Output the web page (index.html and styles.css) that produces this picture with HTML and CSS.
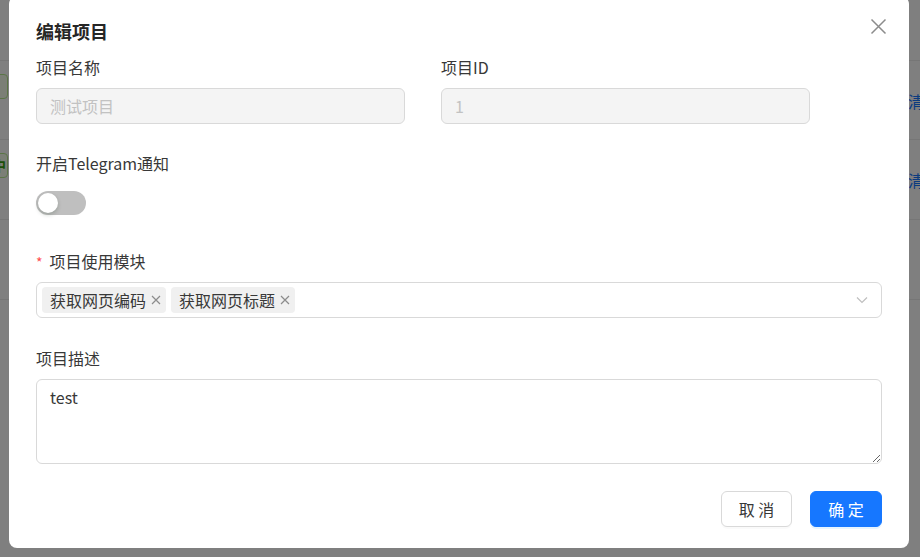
FILE: index.html
```html
<!DOCTYPE html>
<html>
<head>
    <meta charset="UTF-8">
    <title>编辑项目</title>
    <link rel="stylesheet" href="styles.css">
</head>
<body>
    <div class="page">
        <div class="table-row">
            <span class="status-tag status-tag-done">完成</span>
            <a class="row-link">清空</a>
        </div>
        <div class="table-row">
            <span class="status-tag">运行中</span>
            <a class="row-link">清空</a>
        </div>
        <div class="table-row"></div>
    </div>

    <div class="mask"></div>

    <div class="modal-wrap">
        <div class="modal">
            <button class="modal-close" aria-label="close">
                <svg width="17" height="17" viewBox="0 0 17 17">
                    <path d="M1.5 1.5 L15.5 15.5 M15.5 1.5 L1.5 15.5" stroke="#8c8c8c" stroke-width="1.5" fill="none"/>
                </svg>
            </button>
            <div class="modal-title">编辑项目</div>

            <div class="form-row">
                <div class="form-item">
                    <label class="form-label">项目名称</label>
                    <input class="text-input" type="text" value="测试项目" disabled>
                </div>
                <div class="form-item">
                    <label class="form-label">项目ID</label>
                    <input class="text-input" type="text" value="1" disabled>
                </div>
            </div>

            <div class="form-item form-item-switch">
                <label class="form-label">开启Telegram通知</label>
                <div class="switch-line">
                    <span class="switch"><span class="switch-knob"></span></span>
                </div>
            </div>

            <div class="form-item form-item-select">
                <label class="form-label"><span class="required">*</span>项目使用模块</label>
                <div class="select-box">
                    <span class="select-tag">获取网页编码
                        <svg width="10" height="10" viewBox="0 0 10 10"><path d="M1 1 L9 9 M9 1 L1 9" stroke="#8c8c8c" stroke-width="1.2" fill="none"/></svg>
                    </span>
                    <span class="select-tag">获取网页标题
                        <svg width="10" height="10" viewBox="0 0 10 10"><path d="M1 1 L9 9 M9 1 L1 9" stroke="#8c8c8c" stroke-width="1.2" fill="none"/></svg>
                    </span>
                    <svg class="select-arrow" width="12" height="8" viewBox="0 0 12 8"><path d="M1 1.5 L6 6.5 L11 1.5" stroke="#bfbfbf" stroke-width="1.2" fill="none"/></svg>
                </div>
            </div>

            <div class="form-item form-item-desc">
                <label class="form-label">项目描述</label>
                <textarea class="text-area">test</textarea>
            </div>

            <div class="modal-footer">
                <button class="btn">取 消</button>
                <button class="btn btn-primary">确 定</button>
            </div>
        </div>
    </div>
</body>
</html>
```

FILE: styles.css
```css
* {
    margin: 0;
    padding: 0;
    box-sizing: border-box;
    font-family: "Noto Sans CJK SC", "Noto Sans", sans-serif;
}

body {
    background-color: #fff;
    width: 920px;
    height: 557px;
    overflow: hidden;
}

/* page behind the dialog */
.page {
    padding-top: 60px;
}

.table-row {
    display: flex;
    justify-content: space-between;
    align-items: flex-start;
    height: 80px;
    border-bottom: 1px solid #ececec;
}

.table-row:first-child {
    border-top: 1px solid #ececec;
}

.status-tag {
    width: 60px;
    height: 25px;
    margin-top: 13px;
    margin-left: -52px;
    padding-right: 1px;
    text-align: right;
    font-size: 14px;
    line-height: 23px;
    font-weight: bold;
    color: #389e0d;
    background: #f6ffed;
    border: 1px solid #b7eb8f;
    border-radius: 4px;
}

.status-tag-done {
    padding-right: 26px;
}

.row-link {
    margin-top: 28px;
    margin-right: -20px;
    font-size: 16px;
    color: #1677ff;
}

.mask {
    position: fixed;
    inset: 0;
    background: rgba(0, 0, 0, 0.5);
}

.modal-wrap {
    position: fixed;
    inset: 0;
    display: flex;
    justify-content: center;
    align-items: flex-start;
}

.modal {
    position: relative;
    width: 900px;
    margin-top: -4px;
    margin-left: -2px;
    padding: 23px 27px 21px;
    background: #fff;
    border-radius: 8px;
}

.modal-close {
    position: absolute;
    top: 22px;
    right: 22px;
    width: 17px;
    height: 17px;
    border: none;
    background: none;
    display: flex;
}

.modal-title {
    font-size: 18px;
    font-weight: bold;
    line-height: 24px;
    color: #262626;
    margin-bottom: 13px;
}

.form-row {
    display: grid;
    grid-template-columns: 405px 405px;
}

.form-row .text-input {
    width: 369px;
}

.form-item {
    margin-bottom: 28px;
}

.form-item-select {
    margin-bottom: 29px;
}

.form-item-desc {
    margin-bottom: 27px;
}

.form-label {
    display: block;
    height: 22px;
    font-size: 16px;
    line-height: 22px;
    color: #383838;
    margin-bottom: 10px;
}

.required {
    color: #ff4d4f;
    font-size: 14px;
    line-height: 1;
    margin-right: 7px;
}

.text-input {
    display: block;
    height: 36px;
    padding: 0 13px;
    font-size: 16px;
    color: #c2c2c2;
    background: #f4f4f4;
    border: 1px solid #d9d9d9;
    border-radius: 6px;
}

.switch-line {
    height: 38px;
    display: flex;
    align-items: center;
}

.switch {
    width: 50px;
    height: 24px;
    border-radius: 12px;
    background: #bfbfbf;
    padding: 2px;
    display: flex;
}

.switch-knob {
    width: 20px;
    height: 20px;
    border-radius: 50%;
    background: #fff;
    box-shadow: 0 2px 4px rgba(0, 35, 11, 0.2);
}

.select-box {
    position: relative;
    display: flex;
    align-items: center;
    gap: 5px;
    height: 36px;
    padding: 0 5px;
    border: 1px solid #d9d9d9;
    border-radius: 6px;
}

.select-tag {
    display: inline-flex;
    align-items: center;
    gap: 5px;
    height: 26px;
    padding: 0 5px 0 8px;
    font-size: 16px;
    color: #383838;
    background: #f0f0f0;
    border-radius: 4px;
}

.select-arrow {
    position: absolute;
    right: 13px;
    top: 13px;
}

.text-area {
    display: block;
    width: 100%;
    height: 85px;
    padding: 6px 13px;
    font-size: 16px;
    line-height: 22px;
    color: #383838;
    border: 1px solid #d9d9d9;
    border-radius: 6px;
    resize: vertical;
    outline: none;
}

.modal-footer {
    display: flex;
    justify-content: flex-end;
    gap: 18px;
}

.btn {
    height: 36px;
    width: 71px;
    font-size: 16px;
    color: #383838;
    background: #fff;
    border: 1px solid #d9d9d9;
    border-radius: 6px;
    box-shadow: 0 2px 0 rgba(0, 0, 0, 0.02);
}

.btn-primary {
    width: 72px;
    color: #fff;
    background: #1677ff;
    border-color: #1677ff;
    box-shadow: 0 2px 0 rgba(5, 145, 255, 0.1);
}
```
